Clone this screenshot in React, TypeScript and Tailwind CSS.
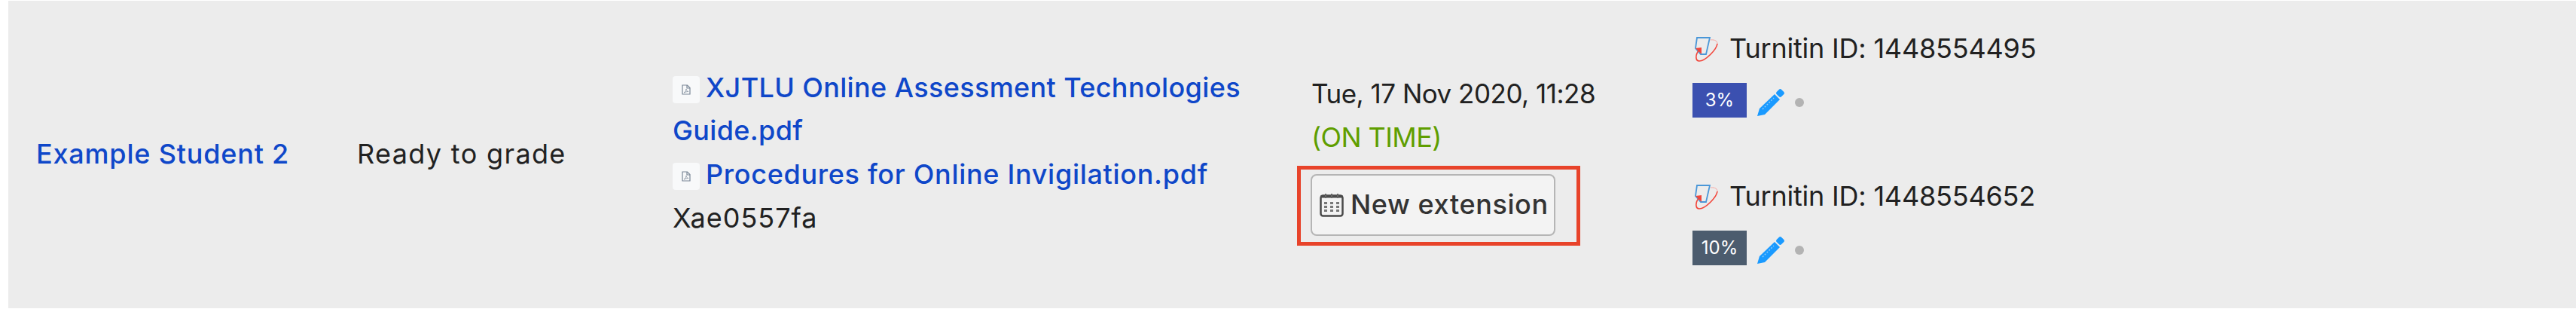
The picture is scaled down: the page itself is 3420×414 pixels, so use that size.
const Pdf = () => (
  <span className="mr-2 inline-flex h-9 w-9 items-center justify-center rounded-[4px] bg-[#f8f9fa] align-[3px]">
    <svg viewBox="0 0 12 14" className="h-[14px] w-3" fill="none" stroke="#7a8797" strokeWidth="1.2">
      <path d="M1 1h6.500L11 4.500V13H1z" />
      <path d="M7 1v4h4" />
      <path d="M3 11c2-1 3-3 3-5 0 2 1 3 3 3.500-2 0-4 .5-6 1.500z" strokeWidth="0.7" />
    </svg>
  </span>
);

const TurnitinLogo = () => (
  <svg viewBox="0 0 31 33" className="mr-[15px] h-[33px] w-[31px] shrink-0" fill="none">
    <path d="M3 1h17l-5 22H8l-7-8z" stroke="#4a97d8" strokeWidth="1.800" />
    <path d="M21 4c3-.5 9 0 9 5" stroke="#f7a9a3" strokeWidth="1" />
    <path d="M30 9c-1 8-16 23-24 23-5 0-6-8 0-15" stroke="#f2453a" strokeWidth="1.600" />
    <path d="M1 15l8-1v9z" fill="#f2453a" />
  </svg>
);

const Pencil = () => (
  <svg viewBox="0 0 36 36" className="h-9 w-9" fill="#1a9aff">
    <path d="M0 36l3-10L23 7l7 7L10 34z" />
    <rect x="26" y="1" width="9" height="9" rx="2.500" transform="rotate(45 30.500 5.500)" />
    <path d="M7 27L22 12" stroke="#8cc9f7" strokeWidth="1.500" strokeDasharray="2 2" />
  </svg>
);

const CalendarIcon = () => (
  <svg viewBox="0 0 32 32" className="mr-[9px] h-8 w-8 shrink-0" fill="none">
    <rect x="1.500" y="3.500" width="29" height="27" rx="3" fill="#f3f3f3" stroke="#4a4a4a" strokeWidth="2.500" />
    <path d="M1 5h30" stroke="#4a4a4a" strokeWidth="3" />
    <path d="M8 1v6M16 1v6M24 1v6" stroke="#666" strokeWidth="2" />
    <path d="M8 12v14M16 12v14M24 12v14" stroke="#777" strokeWidth="4" strokeDasharray="3 2" />
  </svg>
);

function Report({ id, score, badge, className }: { id: string; score: string; badge: string; className: string }) {
  return (
    <div className={className}>
      <div className="flex h-[58px] items-center pl-[3px] tracking-[-0.2px]">
        <TurnitinLogo />
        <span>Turnitin ID: {id}</span>
      </div>
      <div className="mt-4 flex items-center">
        <span className={`flex h-[46px] w-[72px] items-center justify-center text-[24px] tracking-normal text-white ${badge}`}>{score}</span>
        <span className="ml-[14px] mt-[6px]">
          <Pencil />
        </span>
        <span className="ml-[14px] mt-1.5 h-3 w-3 rounded-full bg-[#b3b3b3] blur-[0.5px]" />
      </div>
    </div>
  );
}

export default function App() {
  return (
    <div className="h-[414px] w-[3420px] bg-white pt-px font-['Inter','Liberation_Sans',sans-serif] text-[36px] leading-[57.6px] text-[#212121]">
      <div className="ml-[11px] flex h-[408px] items-center bg-[#ececec]">
        <div className="w-[463px] pl-[37px] font-medium tracking-[0.8px] text-[#0f47c9]">Example Student 2</div>
        <div className="w-[419px] tracking-[1.35px]">Ready to grade</div>
        <div className="w-[848px] pb-1">
          <div className="w-[800px] font-medium text-[#0f47c9]">
            <div className="tracking-[0.36px]">
              <Pdf />
              XJTLU Online Assessment Technologies Guide.pdf
            </div>
            <div className="tracking-[0.7px]">
              <Pdf />
              Procedures for Online Invigilation.pdf
            </div>
          </div>
          <div className="tracking-[1px]">Xae0557fa</div>
        </div>
        <div className="w-[506px] pt-3">
          <div className="text-[35px] tracking-[-0.5px]">Tue, 17 Nov 2020, 11:28</div>
          <div className="tracking-[-0.6px] text-[#5f9e00]">(ON TIME)</div>
          <div className="-ml-[19px] mt-[9px] w-[376px] border-[5px] border-[#e8432a] pb-2 pl-[13px] pt-1.5">
            <button className="flex h-[82px] w-[325px] items-center rounded-lg border-2 border-[#b5b5b5] bg-[#f3f3f3] pl-[10px] font-medium tracking-[0.6px] text-[#333]">
              <CalendarIcon />
              New extension
            </button>
          </div>
        </div>
        <div className="mb-[22px]">
          <Report id="1448554495" score="3%" badge="bg-[#3b50b0]" className="" />
          <Report id="1448554652" score="10%" badge="bg-[#4c5c6e]" className="mt-[76px]" />
        </div>
      </div>
    </div>
  );
}
